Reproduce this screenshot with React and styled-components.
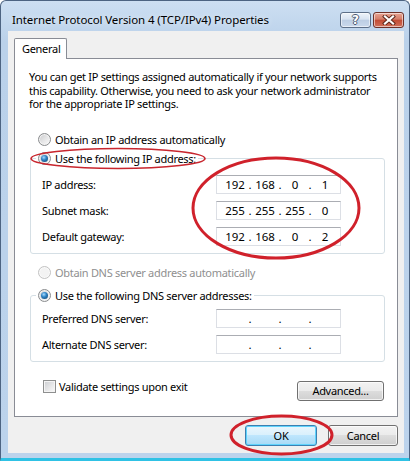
import React from "react";
import styled, { createGlobalStyle, css } from "styled-components";

const GlobalStyle = createGlobalStyle`
  html, body {
    margin: 0;
    padding: 0;
    background: #ffffff;
  }
  body {
    font-family: "Noto Sans", "DejaVu Sans", sans-serif;
    font-size: 11px;
    letter-spacing: -0.3px;
    color: #000;
  }
`;

const Window = styled.div`
  position: relative;
  box-sizing: border-box;
  width: 410px;
  height: 461px;
  display: flex;
  flex-direction: column;
  padding-bottom: 5px;
  border: 1px solid #4d6482;
  border-bottom: 3px solid #2fc2e5;
  border-radius: 6px 6px 0 0;
  background: linear-gradient(#cddff2, #bad1ea 40px, #bcd3ec);
`;

const TitleBar = styled.div`
  height: 30px;
  display: flex;
  align-items: flex-start;
  justify-content: space-between;
  padding: 0 5px 0 11px;
`;

const Title = styled.div`
  margin-top: 11px;
  font-size: 11.5px;
  letter-spacing: -0.1px;
  line-height: 16px;
  color: #000;
  text-shadow: 0 0 6px rgba(255, 255, 255, 0.8);
`;

const CaptionButtons = styled.div`
  display: flex;
  gap: 2px;
  margin-top: 11px;
`;

const CaptionButton = styled.div`
  box-sizing: border-box;
  width: 31px;
  height: 16px;
  display: flex;
  align-items: center;
  justify-content: center;
  border: 1px solid #5d6f88;
  border-radius: 3px;
  box-shadow: inset 0 0 0 1px rgba(255, 255, 255, 0.55);
  ${(p) =>
    p.$close
      ? css`
          border-color: #6e3129;
          background: linear-gradient(#e8a493, #d37c68 45%, #c24b34 50%, #d0705a);
        `
      : css`
          background: linear-gradient(#eef3fa, #d8e3f1 45%, #bccde3 50%, #cad9ec);
        `}
`;

const HelpGlyph = styled.span`
  font-family: "DejaVu Sans", sans-serif;
  font-weight: bold;
  font-size: 12px;
  letter-spacing: 0;
  line-height: 12px;
  color: #fff;
  text-shadow: 1px 0 0 #4b5a70, -1px 0 0 #4b5a70, 0 1px 0 #4b5a70, 0 -1px 0 #4b5a70;
`;

const Client = styled.div`
  flex: 1;
  display: flex;
  flex-direction: column;
  margin: 0 5px 0 7px;
  padding: 7px 6px 0 6px;
  background: #f0f0f0;
`;

const TabStrip = styled.div`
  display: flex;
  height: 20px;
`;

const Tab = styled.div`
  position: relative;
  z-index: 1;
  box-sizing: border-box;
  width: 53px;
  height: 21px;
  padding-left: 7px;
  line-height: 19px;
  background: #fff;
  border: 1px solid #898c95;
  border-bottom: none;
  border-radius: 2px 2px 0 0;
`;

const TabPanel = styled.div`
  box-sizing: border-box;
  height: 359px;
  display: flex;
  flex-direction: column;
  padding: 0 12px 0 15px;
  background: #fff;
  border: 1px solid #898c95;
`;

const Intro = styled.p`
  margin: 11px 0 0 -1px;
  line-height: 13.5px;
  white-space: pre;
`;

const OptionRow = styled.label`
  display: flex;
  align-items: center;
  height: 16px;
  margin-top: ${(p) => p.$top || 0}px;
  padding-left: ${(p) => (p.$inset == null ? 8 : p.$inset)}px;
  color: ${(p) => (p.$disabled ? "#8f8f8f" : "#000")};
  white-space: nowrap;
`;

const RadioDot = styled.span`
  position: relative;
  box-sizing: border-box;
  flex: none;
  width: 13px;
  height: 13px;
  margin-right: 4px;
  border-radius: 50%;
  border: 1px solid ${(p) => (p.$disabled ? "#c3c3c3" : "#8a8c8e")};
  background: ${(p) =>
    p.$disabled
      ? "#f3f3f3"
      : "linear-gradient(135deg, #c9cacc 0%, #e7e7e8 55%, #fbfbfb 100%)"};
  box-shadow: inset 0 0 0 1px ${(p) => (p.$disabled ? "#fafafa" : "#f3f3f3")};
  ${(p) =>
    p.$checked &&
    css`
      &::after {
        content: "";
        position: absolute;
        left: 2px;
        top: 2px;
        width: 7px;
        height: 7px;
        border-radius: 50%;
        background: radial-gradient(circle at 40% 35%, #a8dcff 0%, #2f84c6 40%, #0e3d66 100%);
      }
    `}
`;

const CheckBox = styled.span`
  box-sizing: border-box;
  flex: none;
  width: 13px;
  height: 13px;
  margin-right: 3px;
  border: 1px solid #8e8f8f;
  background: linear-gradient(135deg, #cbcdd1 0%, #e9e9ea 60%, #fafafa 100%);
  box-shadow: inset 0 0 0 1px #f4f4f4;
`;

const Group = styled.fieldset`
  margin: ${(p) => p.$top || 0}px 0 0 0;
  padding: 0 0 7px 0;
  border: 1px solid #d5dfe5;
  border-radius: 3px;
  min-inline-size: 0;
`;

const GroupLegend = styled.legend`
  margin-left: 5px;
  padding: 0 2px;
`;

const FieldRows = styled.div`
  display: flex;
  flex-direction: column;
  gap: 7px;
  padding: ${(p) => p.$top || 0}px 0 0 11px;
`;

const FieldRow = styled.div`
  display: flex;
  align-items: center;
  height: 19px;
`;

const FieldLabel = styled.span`
  width: 174px;
`;

const IpInput = styled.div`
  box-sizing: border-box;
  width: 125px;
  height: 19px;
  display: grid;
  grid-template-columns: 24px 6px 24px 6px 24px 6px 24px;
  align-items: center;
  padding-left: 6px;
  background: #fff;
  border: 1px solid #dcdfe5;
  border-top-color: #abadb3;
  font-size: 11.5px;
  letter-spacing: 0;
  line-height: 17px;
  text-align: center;
`;

const BottomRow = styled.div`
  display: flex;
  align-items: flex-start;
  justify-content: space-between;
  margin-top: 17px;
  padding: 0 1px 0 13px;
`;

const Button = styled.button`
  box-sizing: border-box;
  width: ${(p) => p.$w}px;
  height: ${(p) => p.$h || 21}px;
  margin-top: ${(p) => p.$top || 0}px;
  padding: 0;
  font: inherit;
  letter-spacing: inherit;
  color: #000;
  border-radius: 3px;
  border: 1px solid ${(p) => (p.$primary ? "#3c7fb1" : "#707070")};
  background: ${(p) =>
    p.$primary
      ? "linear-gradient(#eaf6fd, #d9f0fc 48%, #bee6fd 50%, #a7d9f5)"
      : "linear-gradient(#f2f2f2, #ebebeb 48%, #dddddd 50%, #cfcfcf)"};
  box-shadow: inset 0 0 0 1px ${(p) => (p.$primary ? "#5fd3fc" : "rgba(255,255,255,0.7)")};
`;

const DialogButtons = styled.div`
  display: flex;
  justify-content: flex-end;
  gap: 11px;
  margin-top: 8px;
`;

const Marks = styled.svg`
  position: absolute;
  left: -1px;
  top: -1px;
  pointer-events: none;
`;

const Radio = ({ checked, disabled, children, ...rest }) => (
  <OptionRow $disabled={disabled} {...rest}>
    <RadioDot $checked={checked} $disabled={disabled} />
    {children}
  </OptionRow>
);

const IpBox = ({ parts = ["", "", "", ""] }) => (
  <IpInput>
    {parts.map((v, i) => (
      <React.Fragment key={i}>
        {i > 0 && <span>.</span>}
        <span>{v}</span>
      </React.Fragment>
    ))}
  </IpInput>
);

const CloseGlyph = () => (
  <svg width="14" height="10" viewBox="0 0 14 10">
    <path d="M3 1.5 L11 8.5 M11 1.5 L3 8.5" stroke="#5a2418" strokeWidth="4" strokeLinecap="square" />
    <path d="M3 1.5 L11 8.5 M11 1.5 L3 8.5" stroke="#fff" strokeWidth="2.2" strokeLinecap="square" />
  </svg>
);

export default function App() {
  return (
    <>
      <GlobalStyle />
      <Window>
        <TitleBar>
          <Title>Internet Protocol Version 4 (TCP/IPv4) Properties</Title>
          <CaptionButtons>
            <CaptionButton>
              <HelpGlyph>?</HelpGlyph>
            </CaptionButton>
            <CaptionButton $close>
              <CloseGlyph />
            </CaptionButton>
          </CaptionButtons>
        </TitleBar>
        <Client>
          <TabStrip>
            <Tab>General</Tab>
          </TabStrip>
          <TabPanel>
            <Intro>
              {"You can get IP settings assigned automatically if your network supports\nthis capability. Otherwise, you need to ask your network administrator\nfor the appropriate IP settings."}
            </Intro>
            <Radio $top={21}>Obtain an IP address automatically</Radio>
            <Group $top={3}>
              <GroupLegend>
                <Radio checked $inset={0}>Use the following IP address:</Radio>
              </GroupLegend>
              <FieldRows $top={8}>
                <FieldRow>
                  <FieldLabel>IP address:</FieldLabel>
                  <IpBox parts={["192", "168", "0", "1"]} />
                </FieldRow>
                <FieldRow>
                  <FieldLabel>Subnet mask:</FieldLabel>
                  <IpBox parts={["255", "255", "255", "0"]} />
                </FieldRow>
                <FieldRow>
                  <FieldLabel>Default gateway:</FieldLabel>
                  <IpBox parts={["192", "168", "0", "2"]} />
                </FieldRow>
              </FieldRows>
            </Group>
            <Radio disabled $top={11}>Obtain DNS server address automatically</Radio>
            <Group $top={7}>
              <GroupLegend>
                <Radio checked $inset={0}>Use the following DNS server addresses:</Radio>
              </GroupLegend>
              <FieldRows $top={5}>
                <FieldRow>
                  <FieldLabel>Preferred DNS server:</FieldLabel>
                  <IpBox />
                </FieldRow>
                <FieldRow>
                  <FieldLabel>Alternate DNS server:</FieldLabel>
                  <IpBox />
                </FieldRow>
              </FieldRows>
            </Group>
            <BottomRow>
              <OptionRow $inset={0}>
                <CheckBox />
                Validate settings upon exit
              </OptionRow>
              <Button $w={87} $h={20} $top={2}>Advanced...</Button>
            </BottomRow>
          </TabPanel>
          <DialogButtons>
            <Button $primary $w={72}>OK</Button>
            <Button $w={70}>Cancel</Button>
          </DialogButtons>
        </Client>
        <Marks width="413" height="461" viewBox="0 0 413 461">
          <ellipse cx="118" cy="158.5" rx="87" ry="10" fill="none" stroke="#c8262e" strokeWidth="1.6" />
          <ellipse cx="276" cy="208" rx="83" ry="50" fill="none" stroke="#d0212b" strokeWidth="3" />
          <ellipse cx="281.5" cy="435" rx="50.5" ry="19" fill="none" stroke="#d0212b" strokeWidth="3" />
        </Marks>
      </Window>
    </>
  );
}
